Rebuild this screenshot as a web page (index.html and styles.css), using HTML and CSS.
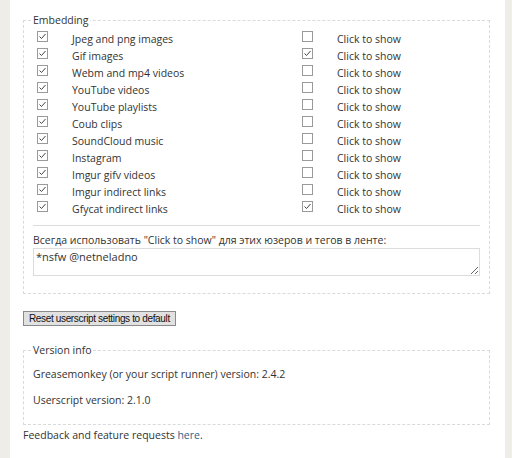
FILE: index.html
```html
<!DOCTYPE html>
<html lang="ru">
<head>
  <meta charset="UTF-8" />
  <meta name="viewport" content="width=device-width, initial-scale=1" />
  <title>Userscript settings</title>
  <link rel="stylesheet" href="styles.css">
</head>
<body>
  <div class="settings-page">
    <fieldset class="box">
      <legend>Embedding</legend>
      <div class="embed-grid">
        <label class="cb"><input type="checkbox" checked></label><span>Jpeg and png images</span>
        <label class="cb"><input type="checkbox"></label><span>Click to show</span>

        <label class="cb"><input type="checkbox" checked></label><span>Gif images</span>
        <label class="cb"><input type="checkbox" checked></label><span>Click to show</span>

        <label class="cb"><input type="checkbox" checked></label><span>Webm and mp4 videos</span>
        <label class="cb"><input type="checkbox"></label><span>Click to show</span>

        <label class="cb"><input type="checkbox" checked></label><span>YouTube videos</span>
        <label class="cb"><input type="checkbox"></label><span>Click to show</span>

        <label class="cb"><input type="checkbox" checked></label><span>YouTube playlists</span>
        <label class="cb"><input type="checkbox"></label><span>Click to show</span>

        <label class="cb"><input type="checkbox" checked></label><span>Coub clips</span>
        <label class="cb"><input type="checkbox"></label><span>Click to show</span>

        <label class="cb"><input type="checkbox" checked></label><span>SoundCloud music</span>
        <label class="cb"><input type="checkbox"></label><span>Click to show</span>

        <label class="cb"><input type="checkbox" checked></label><span>Instagram</span>
        <label class="cb"><input type="checkbox"></label><span>Click to show</span>

        <label class="cb"><input type="checkbox" checked></label><span>Imgur gifv videos</span>
        <label class="cb"><input type="checkbox"></label><span>Click to show</span>

        <label class="cb"><input type="checkbox" checked></label><span>Imgur indirect links</span>
        <label class="cb"><input type="checkbox"></label><span>Click to show</span>

        <label class="cb"><input type="checkbox" checked></label><span>Gfycat indirect links</span>
        <label class="cb"><input type="checkbox" checked></label><span>Click to show</span>
      </div>
      <hr class="sep">
      <label class="ta-label" for="cts">Всегда использовать "Click to show" для этих юзеров и тегов в ленте:</label>
      <textarea id="cts" class="ta">*nsfw @netneladno</textarea>
    </fieldset>

    <button type="button" class="reset-btn">Reset userscript settings to default</button>

    <fieldset class="box version">
      <legend>Version info</legend>
      <p>Greasemonkey (or your script runner) version: 2.4.2</p>
      <p>Userscript version: 2.1.0</p>
    </fieldset>

    <p class="feedback">Feedback and feature requests <a href="#">here</a>.</p>
  </div>
</body>
</html>
```

FILE: styles.css
```css
* {
  box-sizing: border-box;
}
html, body {
  margin: 0;
  height: 100%;
}
body {
  background: #eeede7;
  font-family: 'Open Sans', sans-serif;
  font-size: 10.5px;
  color: #333333;
}
.settings-page {
  background: #ffffff;
  margin: 0 7px 0 10px;
  height: 100%;
  padding: 13px 15px 0 13px;
  overflow: hidden;
}
.box {
  margin: 0;
  border: 1px dashed #dadada;
  padding: 0 9px 17px 9px;
}
.box legend {
  padding: 0 1px 0 0;
  margin-left: 0;
  line-height: 14px;
}
.embed-grid {
  display: grid;
  grid-template-columns: 39px 226px 39px 1fr;
  grid-auto-rows: 17px;
  align-items: center;
  padding-top: 3px;
}
.cb {
  display: flex;
  align-items: center;
  padding-left: 4px;
}
.cb input {
  appearance: none;
  -webkit-appearance: none;
  margin: 0;
  width: 11px;
  height: 11px;
  border: 1px solid #9a9a9a;
  background: #ffffff;
  position: relative;
  top: -2px;
}
.cb input:checked {
  background-image: url("data:image/svg+xml,%3Csvg xmlns='http://www.w3.org/2000/svg' width='9' height='9' viewBox='0 0 9 9'%3E%3Cpath d='M1.5 4.5 L3.5 6.5 L7.5 2' fill='none' stroke='%23444' stroke-width='1'/%3E%3C/svg%3E");
  background-repeat: no-repeat;
  background-position: center;
}
.sep {
  border: 0;
  border-top: 1px solid #dcdcdc;
  margin: 8px 0 7px 0;
}
.ta-label {
  display: block;
  line-height: 15px;
}
.ta {
  display: block;
  width: 100%;
  height: 28px;
  margin-top: 0;
  border: 1px solid #dcdcdc;
  font-family: 'Open Sans', sans-serif;
  font-size: 11px;
  color: #333333;
  padding: 0 2px;
  line-height: 15px;
}
.reset-btn {
  display: block;
  margin-top: 17px;
  height: 15px;
  padding: 0 5px;
  font-family: 'Liberation Sans', Arial, sans-serif;
  font-size: 10px;
  letter-spacing: -0.35px;
  color: #111111;
  background: #e1e1e1;
  border: 1px solid #8a8a8a;
  line-height: 13px;
}
.version {
  margin-top: 17px;
  padding: 10px 9px 17px 9px;
}
.version p {
  margin: 0 0 12px 0;
  line-height: 14px;
}
.version p:last-child {
  margin-bottom: 0;
}
.feedback {
  margin: 3px 0 0 0;
  line-height: 15px;
}
.feedback a {
  color: #2b5f8d;
  text-decoration: none;
}
```
